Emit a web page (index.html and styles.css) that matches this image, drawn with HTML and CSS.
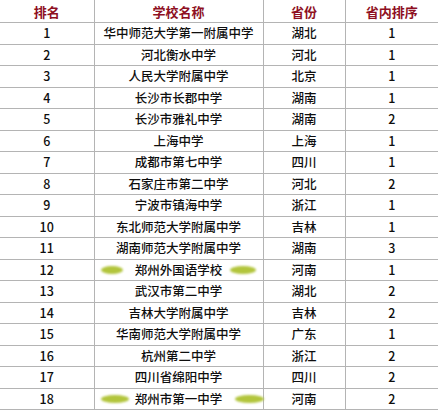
FILE: index.html
```html
<!DOCTYPE html>
<html lang="zh">
<head>
<meta charset="utf-8">
<link rel="stylesheet" href="styles.css">
</head>
<body>
<table class="rank">
  <colgroup>
    <col class="c1"><col class="c2"><col class="c3"><col class="c4">
  </colgroup>
  <thead>
    <tr><th>排名</th><th>学校名称</th><th>省份</th><th>省内排序</th></tr>
  </thead>
  <tbody>
    <tr><td>1</td><td>华中师范大学第一附属中学</td><td>湖北</td><td>1</td></tr>
    <tr><td>2</td><td>河北衡水中学</td><td>河北</td><td>1</td></tr>
    <tr><td>3</td><td>人民大学附属中学</td><td>北京</td><td>1</td></tr>
    <tr><td>4</td><td>长沙市长郡中学</td><td>湖南</td><td>1</td></tr>
    <tr><td>5</td><td>长沙市雅礼中学</td><td>湖南</td><td>2</td></tr>
    <tr><td>6</td><td>上海中学</td><td>上海</td><td>1</td></tr>
    <tr><td>7</td><td>成都市第七中学</td><td>四川</td><td>1</td></tr>
    <tr><td>8</td><td>石家庄市第二中学</td><td>河北</td><td>2</td></tr>
    <tr><td>9</td><td>宁波市镇海中学</td><td>浙江</td><td>1</td></tr>
    <tr><td>10</td><td>东北师范大学附属中学</td><td>吉林</td><td>1</td></tr>
    <tr><td>11</td><td>湖南师范大学附属中学</td><td>湖南</td><td>3</td></tr>
    <tr><td>12</td><td class="mark"><span class="blob b12l"></span>郑州外国语学校<span class="blob b12r"></span></td><td>河南</td><td>1</td></tr>
    <tr><td>13</td><td>武汉市第二中学</td><td>湖北</td><td>2</td></tr>
    <tr><td>14</td><td>吉林大学附属中学</td><td>吉林</td><td>2</td></tr>
    <tr><td>15</td><td>华南师范大学附属中学</td><td>广东</td><td>1</td></tr>
    <tr><td>16</td><td>杭州第二中学</td><td>浙江</td><td>2</td></tr>
    <tr><td>17</td><td>四川省绵阳中学</td><td>四川</td><td>2</td></tr>
    <tr><td>18</td><td class="mark"><span class="blob b18l"></span>郑州市第一中学<span class="blob b18r"></span></td><td>河南</td><td>2</td></tr>
  </tbody>
</table>
</body>
</html>
```
FILE: styles.css
```css
html, body {
  margin: 0;
  padding: 0;
  background: #ffffff;
}
body {
  width: 438px;
  height: 411px;
  overflow: hidden;
  font-family: "Noto Sans CJK SC", "Noto Sans", sans-serif;
}
.rank {
  width: 438px;
  border-collapse: collapse;
  table-layout: fixed;
}
.c1 { width: 94px; }
.c2 { width: 169px; }
.c3 { width: 82px; }
.c4 { width: 93px; }
.rank th,
.rank td {
  border: 1px solid #b4b4b4;
  padding: 0;
  text-align: center;
  vertical-align: middle;
  line-height: 1;
  white-space: nowrap;
}
.rank th {
  height: 22px;
  font-size: 13px;
  font-weight: 700;
  color: #8e0f22;
  border-top: none;
}
.rank td {
  height: 20.5px;
  font-size: 12.5px;
  font-weight: 500;
  color: #0e0e0e;
}
.rank tr > *:first-child { border-left: none; }
.rank tr > *:last-child { border-right: none; }
.mark {
  position: relative;
}
.blob {
  position: absolute;
  top: 6.5px;
  height: 8px;
  border-radius: 50%;
  background: #b2c53c;
  filter: blur(1.2px);
}
.b12l { left: 6px; width: 22px; }
.b12r { left: 135px; width: 26px; }
.b18l { left: 6px; width: 28px; }
.b18r { left: 140px; width: 29px; }
```
